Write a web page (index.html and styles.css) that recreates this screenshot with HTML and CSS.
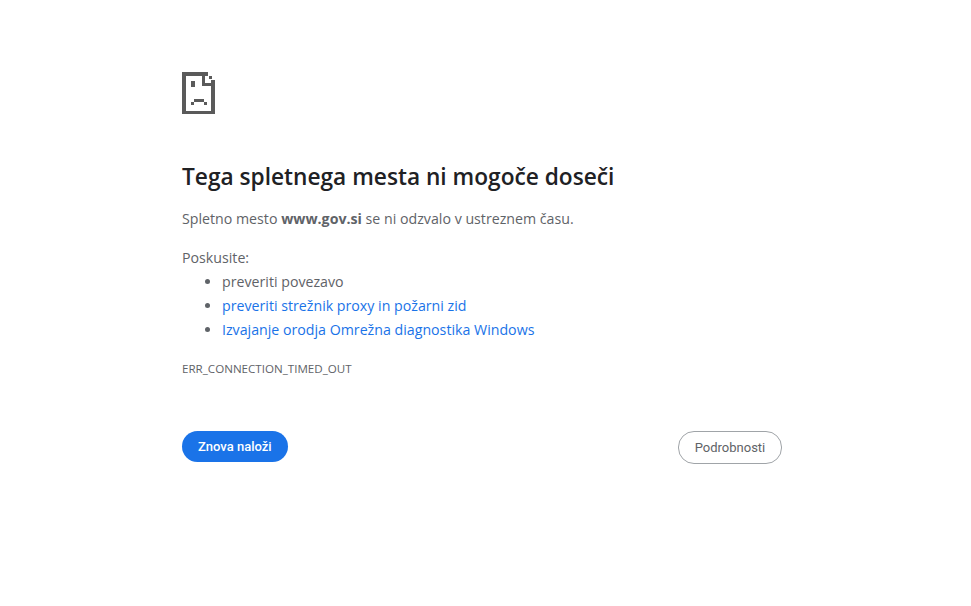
FILE: index.html
```html
<!DOCTYPE html>
<html lang="sl">
<head>
<meta charset="utf-8">
<title>www.gov.si</title>
<link rel="stylesheet" href="styles.css">
</head>
<body>
<main class="page">
  <svg class="icon" width="33" height="42" viewBox="0 0 33 42" shape-rendering="crispEdges" fill="#5a5a5a" aria-hidden="true">
    <rect x="0" y="0" width="26" height="4"/>
    <rect x="0" y="0" width="4" height="42"/>
    <rect x="0" y="39" width="33" height="3"/>
    <rect x="29" y="8" width="4" height="34"/>
    <rect x="20" y="0" width="3" height="14"/>
    <rect x="20" y="11" width="13" height="3"/>
    <rect x="27" y="4" width="3" height="3"/>
    <rect x="9" y="9" width="4" height="6"/>
    <rect x="12" y="27" width="10" height="3"/>
    <rect x="9" y="30" width="3" height="3"/>
    <rect x="22" y="30" width="3" height="3"/>
  </svg>
  <h1 class="title">Tega spletnega mesta ni mogoče doseči</h1>
  <p class="summary">Spletno mesto <strong>www.gov.si</strong> se ni odzvalo v ustreznem času.</p>
  <div class="try">
    <p class="try-label">Poskusite:</p>
    <ul class="tips">
      <li>preveriti povezavo</li>
      <li><a href="#">preveriti strežnik proxy in požarni zid</a></li>
      <li><a href="#">Izvajanje orodja Omrežna diagnostika Windows</a></li>
    </ul>
  </div>
  <div class="code">ERR_CONNECTION_TIMED_OUT</div>
  <div class="actions">
    <button class="btn primary">Znova naloži</button>
    <button class="btn secondary">Podrobnosti</button>
  </div>
</main>
</body>
</html>
```
FILE: styles.css
```css
html, body { margin: 0; padding: 0; background: #fff; }
body { font-family: "Open Sans", "Noto Sans", sans-serif; font-size: 14.2px; color: #5f6368; }
.page { width: 600px; margin-left: 182px; padding-top: 72px; }
.icon { display: block; }
.title { margin: 47px 0 0; font-size: 22.7px; line-height: 32px; font-weight: 600; color: #202124; }
.summary { margin: 16px 0 0; line-height: 20px; }
.summary strong { font-weight: 700; }
.try { margin-top: 19px; }
.try-label { margin: 0 0 2px; line-height: 20px; }
.tips { margin: 0; padding-left: 40px; }
.tips li { line-height: 24px; }
.tips a { color: #1a73e8; text-decoration: none; }
.code { margin-top: 19px; font-size: 11.6px; line-height: 16px; }
.actions { display: flex; justify-content: space-between; align-items: flex-start; margin-top: 54px; }
.btn { font-family: Roboto, sans-serif; font-size: 13px; font-weight: 500; height: 31px; border-radius: 16px; padding: 0 16px; border: 0; }
.primary { background: #1a73e8; color: #fff; }
.secondary { background: #fff; color: #5f6368; font-weight: 400; height: 33px; width: 104px; padding: 0; border: 1px solid #a0a4a8; }
```
